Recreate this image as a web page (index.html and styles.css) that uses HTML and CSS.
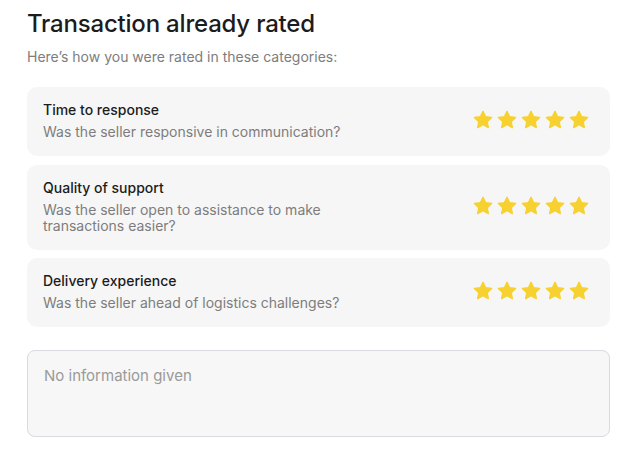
FILE: index.html
```html
<!DOCTYPE html>
<html>
<head>
    <title>Transaction already rated</title>
    <link rel="stylesheet" href="styles.css">
</head>
<body>
    <div class="page">
        <h1>Transaction already rated</h1>
        <p class="intro">Here’s how you were rated in these categories:</p>

        <div class="card">
            <div class="text">
                <div class="name">Time to response</div>
                <div class="desc">Was the seller responsive in communication?</div>
            </div>
            <div class="stars">
                <svg viewBox="0 0 24 24"><path d="M12 2.5l2.9 6 6.5.8-4.8 4.5 1.2 6.5L12 17.1l-5.8 3.2 1.2-6.5-4.8-4.5 6.5-.8z"/></svg>
                <svg viewBox="0 0 24 24"><path d="M12 2.5l2.9 6 6.5.8-4.8 4.5 1.2 6.5L12 17.1l-5.8 3.2 1.2-6.5-4.8-4.5 6.5-.8z"/></svg>
                <svg viewBox="0 0 24 24"><path d="M12 2.5l2.9 6 6.5.8-4.8 4.5 1.2 6.5L12 17.1l-5.8 3.2 1.2-6.5-4.8-4.5 6.5-.8z"/></svg>
                <svg viewBox="0 0 24 24"><path d="M12 2.5l2.9 6 6.5.8-4.8 4.5 1.2 6.5L12 17.1l-5.8 3.2 1.2-6.5-4.8-4.5 6.5-.8z"/></svg>
                <svg viewBox="0 0 24 24"><path d="M12 2.5l2.9 6 6.5.8-4.8 4.5 1.2 6.5L12 17.1l-5.8 3.2 1.2-6.5-4.8-4.5 6.5-.8z"/></svg>
            </div>
        </div>

        <div class="card">
            <div class="text">
                <div class="name">Quality of support</div>
                <div class="desc">Was the seller open to assistance to make transactions easier?</div>
            </div>
            <div class="stars">
                <svg viewBox="0 0 24 24"><path d="M12 2.5l2.9 6 6.5.8-4.8 4.5 1.2 6.5L12 17.1l-5.8 3.2 1.2-6.5-4.8-4.5 6.5-.8z"/></svg>
                <svg viewBox="0 0 24 24"><path d="M12 2.5l2.9 6 6.5.8-4.8 4.5 1.2 6.5L12 17.1l-5.8 3.2 1.2-6.5-4.8-4.5 6.5-.8z"/></svg>
                <svg viewBox="0 0 24 24"><path d="M12 2.5l2.9 6 6.5.8-4.8 4.5 1.2 6.5L12 17.1l-5.8 3.2 1.2-6.5-4.8-4.5 6.5-.8z"/></svg>
                <svg viewBox="0 0 24 24"><path d="M12 2.5l2.9 6 6.5.8-4.8 4.5 1.2 6.5L12 17.1l-5.8 3.2 1.2-6.5-4.8-4.5 6.5-.8z"/></svg>
                <svg viewBox="0 0 24 24"><path d="M12 2.5l2.9 6 6.5.8-4.8 4.5 1.2 6.5L12 17.1l-5.8 3.2 1.2-6.5-4.8-4.5 6.5-.8z"/></svg>
            </div>
        </div>

        <div class="card">
            <div class="text">
                <div class="name">Delivery experience</div>
                <div class="desc">Was the seller ahead of logistics challenges?</div>
            </div>
            <div class="stars">
                <svg viewBox="0 0 24 24"><path d="M12 2.5l2.9 6 6.5.8-4.8 4.5 1.2 6.5L12 17.1l-5.8 3.2 1.2-6.5-4.8-4.5 6.5-.8z"/></svg>
                <svg viewBox="0 0 24 24"><path d="M12 2.5l2.9 6 6.5.8-4.8 4.5 1.2 6.5L12 17.1l-5.8 3.2 1.2-6.5-4.8-4.5 6.5-.8z"/></svg>
                <svg viewBox="0 0 24 24"><path d="M12 2.5l2.9 6 6.5.8-4.8 4.5 1.2 6.5L12 17.1l-5.8 3.2 1.2-6.5-4.8-4.5 6.5-.8z"/></svg>
                <svg viewBox="0 0 24 24"><path d="M12 2.5l2.9 6 6.5.8-4.8 4.5 1.2 6.5L12 17.1l-5.8 3.2 1.2-6.5-4.8-4.5 6.5-.8z"/></svg>
                <svg viewBox="0 0 24 24"><path d="M12 2.5l2.9 6 6.5.8-4.8 4.5 1.2 6.5L12 17.1l-5.8 3.2 1.2-6.5-4.8-4.5 6.5-.8z"/></svg>
            </div>
        </div>

        <div class="comment">No information given</div>
    </div>
</body>
</html>
```

FILE: styles.css
```css
body {
    margin: 0;
    background: #fff;
    font-family: Inter, "Noto Sans", sans-serif;
    color: #1c1c1c;
}

.page {
    padding: 8px 28px 0 27px;
}

h1 {
    margin: 0;
    font-size: 24px;
    font-weight: 500;
    line-height: 32px;
    letter-spacing: -0.2px;
}

.intro {
    margin: 7px 0 20px;
    font-size: 14px;
    line-height: 20px;
    color: #7d7d7d;
}

.card {
    display: flex;
    align-items: center;
    justify-content: space-between;
    background: #f6f6f6;
    border-radius: 10px;
    padding: 13px 20px 16px 16px;
    margin-bottom: 8.5px;
}

.text {
    max-width: 340px;
}

.name {
    font-size: 14px;
    font-weight: 500;
    line-height: 20px;
}

.desc {
    margin-top: 4px;
    font-size: 14px;
    line-height: 16px;
    color: #7d7d7d;
}

.stars {
    display: flex;
    gap: 2px;
}

.stars svg {
    width: 22px;
    height: 22px;
    fill: #f7d130;
    stroke: #f7d130;
    stroke-width: 1.5;
    stroke-linejoin: round;
}

.comment {
    margin-top: 23px;
    height: 87px;
    box-sizing: border-box;
    border: 1px solid #d9d9df;
    border-radius: 8px;
    background: #f7f7f7;
    padding: 15px 16px;
    font-size: 15px;
    line-height: 20px;
    color: #9a9a9a;
}
```
